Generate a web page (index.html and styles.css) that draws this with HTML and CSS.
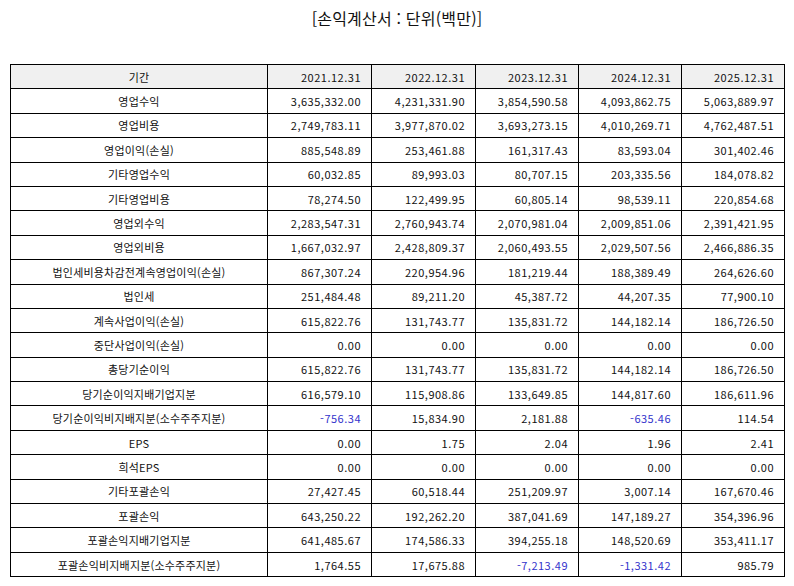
FILE: index.html
```html
<!DOCTYPE html>
<html lang="ko">
<head>
<meta charset="utf-8">
<title>손익계산서</title>
<link rel="stylesheet" href="styles.css">
</head>
<body>
<div class="page">
  <h1 class="title">[손익계산서 : 단위(백만)]</h1>
  <table class="fin">
    <colgroup>
      <col class="c-label"><col class="c-num"><col class="c-num"><col class="c-num3"><col class="c-num3"><col class="c-num3">
    </colgroup>
    <thead>
      <tr><th class="lbl">기간</th><th>2021.12.31</th><th>2022.12.31</th><th>2023.12.31</th><th>2024.12.31</th><th>2025.12.31</th></tr>
    </thead>
    <tbody>
      <tr><td class="lbl">영업수익</td><td>3,635,332.00</td><td>4,231,331.90</td><td>3,854,590.58</td><td>4,093,862.75</td><td>5,063,889.97</td></tr>
      <tr><td class="lbl">영업비용</td><td>2,749,783.11</td><td>3,977,870.02</td><td>3,693,273.15</td><td>4,010,269.71</td><td>4,762,487.51</td></tr>
      <tr><td class="lbl">영업이익(손실)</td><td>885,548.89</td><td>253,461.88</td><td>161,317.43</td><td>83,593.04</td><td>301,402.46</td></tr>
      <tr><td class="lbl">기타영업수익</td><td>60,032.85</td><td>89,993.03</td><td>80,707.15</td><td>203,335.56</td><td>184,078.82</td></tr>
      <tr><td class="lbl">기타영업비용</td><td>78,274.50</td><td>122,499.95</td><td>60,805.14</td><td>98,539.11</td><td>220,854.68</td></tr>
      <tr><td class="lbl">영업외수익</td><td>2,283,547.31</td><td>2,760,943.74</td><td>2,070,981.04</td><td>2,009,851.06</td><td>2,391,421.95</td></tr>
      <tr><td class="lbl">영업외비용</td><td>1,667,032.97</td><td>2,428,809.37</td><td>2,060,493.55</td><td>2,029,507.56</td><td>2,466,886.35</td></tr>
      <tr><td class="lbl">법인세비용차감전계속영업이익(손실)</td><td>867,307.24</td><td>220,954.96</td><td>181,219.44</td><td>188,389.49</td><td>264,626.60</td></tr>
      <tr><td class="lbl">법인세</td><td>251,484.48</td><td>89,211.20</td><td>45,387.72</td><td>44,207.35</td><td>77,900.10</td></tr>
      <tr><td class="lbl">계속사업이익(손실)</td><td>615,822.76</td><td>131,743.77</td><td>135,831.72</td><td>144,182.14</td><td>186,726.50</td></tr>
      <tr><td class="lbl">중단사업이익(손실)</td><td>0.00</td><td>0.00</td><td>0.00</td><td>0.00</td><td>0.00</td></tr>
      <tr><td class="lbl">총당기순이익</td><td>615,822.76</td><td>131,743.77</td><td>135,831.72</td><td>144,182.14</td><td>186,726.50</td></tr>
      <tr><td class="lbl">당기순이익지배기업지분</td><td>616,579.10</td><td>115,908.86</td><td>133,649.85</td><td>144,817.60</td><td>186,611.96</td></tr>
      <tr><td class="lbl">당기순이익비지배지분(소수주주지분)</td><td class="neg">-756.34</td><td>15,834.90</td><td>2,181.88</td><td class="neg">-635.46</td><td>114.54</td></tr>
      <tr><td class="lbl">EPS</td><td>0.00</td><td>1.75</td><td>2.04</td><td>1.96</td><td>2.41</td></tr>
      <tr><td class="lbl">희석EPS</td><td>0.00</td><td>0.00</td><td>0.00</td><td>0.00</td><td>0.00</td></tr>
      <tr><td class="lbl">기타포괄손익</td><td>27,427.45</td><td>60,518.44</td><td>251,209.97</td><td>3,007.14</td><td>167,670.46</td></tr>
      <tr><td class="lbl">포괄손익</td><td>643,250.22</td><td>192,262.20</td><td>387,041.69</td><td>147,189.27</td><td>354,396.96</td></tr>
      <tr><td class="lbl">포괄손익지배기업지분</td><td>641,485.67</td><td>174,586.33</td><td>394,255.18</td><td>148,520.69</td><td>353,411.17</td></tr>
      <tr><td class="lbl">포괄손익비지배지분(소수주주지분)</td><td>1,764.55</td><td>17,675.88</td><td class="neg">-7,213.49</td><td class="neg">-1,331.42</td><td>985.79</td></tr>
    </tbody>
  </table>
</div>
</body>
</html>
```

FILE: styles.css
```css
html, body {
  margin: 0;
  padding: 0;
  background: #fff;
}
body {
  font-family: "Noto Sans CJK KR", "Noto Sans", sans-serif;
  color: #111;
}
.page {
  padding: 6px 10px 0 10px;
}
.title {
  margin: 0;
  height: 58px;
  font-size: 16px;
  font-weight: 400;
  line-height: 24px;
  text-align: center;
  letter-spacing: 0.2px;
  color: #111;
}
.fin {
  width: 774px;
  border-collapse: collapse;
  table-layout: fixed;
  border: 1px solid #000;
  font-size: 11px;
}
.c-label { width: 257px; }
.c-num { width: 104px; }
.c-num3 { width: 103px; }
.fin th, .fin td {
  border: 1px solid #000;
  height: 23.4px;
  padding: 0 10px 0 4px;
  text-align: right;
  font-weight: 400;
  white-space: nowrap;
  line-height: 14px;
  letter-spacing: 0.5px;
}
.fin th {
  background: #f0f0f0;
}
.fin .lbl {
  text-align: center;
  padding: 0 4px;
  letter-spacing: 0.2px;
}
.fin .neg {
  color: #3333cc;
}
```
